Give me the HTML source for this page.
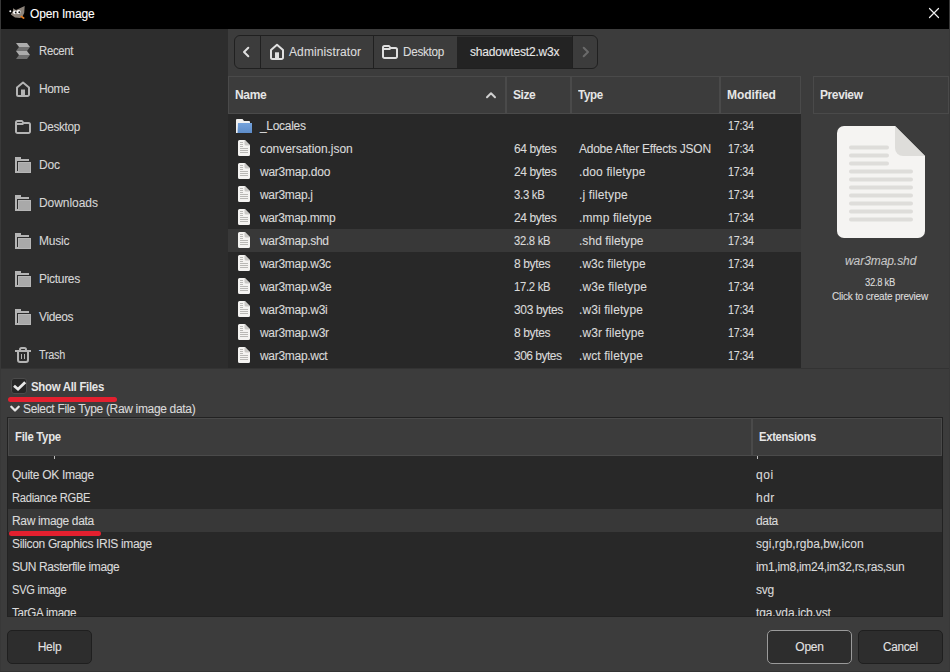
<!DOCTYPE html>
<html><head><meta charset="utf-8"><title>Open Image</title>
<style>
*{margin:0;padding:0;box-sizing:border-box}
html,body{width:950px;height:672px;overflow:hidden;background:#3c3c3c}
body{position:relative;font-family:"Liberation Sans",sans-serif;font-size:12px;color:#dadada;-webkit-text-stroke:0.1px currentColor}
.a{position:absolute}
.t{position:absolute;white-space:nowrap;line-height:14px}
svg{position:absolute;overflow:visible}
#title{left:0;top:0;width:950px;height:29px;background:#000}
#bl{left:0;top:0;width:1px;height:672px;background:#383838}
#br{left:949px;top:0;width:1px;height:672px;background:#383838}
#bb{left:0;top:671px;width:950px;height:1px;background:#333}
#side{left:1px;top:29px;width:227px;height:339px;background:#2d2d2d}
.si{left:15px;width:16px;height:16px}
.sl{left:39px;color:#d6d6d6}
#crumb{left:234px;top:35px;width:364px;height:34px;border:1px solid #202020;border-radius:6px;background:#3c3c3c;overflow:hidden}
.csep{position:absolute;top:0;width:1px;height:32px;background:#202020}
#list{left:228px;top:114px;width:573px;height:254px;background:#282828;overflow:hidden}
.hdr{position:absolute;top:76px;height:38px;background:#3c3c3c;border:1px solid #4a4a4a}
.hl{position:absolute;font-weight:bold;-webkit-text-stroke:0;color:#e6e6e6;letter-spacing:-0.3px;white-space:nowrap;line-height:14px}
.row{position:absolute;left:0;height:23px}
.row .t{top:5px}
#paneh{left:1px;top:368px;width:948px;height:1px;background:#333}
#ft{left:7px;top:417px;width:936px;height:200px;background:#282828;border:1px solid #222;overflow:hidden}
#fth{left:0;top:0;width:934px;height:38px;background:#3c3c3c;border:1px solid #4a4a4a}
#ftl{left:0;top:38px;width:934px;height:160px;overflow:hidden}
.btn{position:absolute;top:630px;height:34px;background:#2d2d2d;border:1px solid #1f1f1f;border-radius:5px}
.bt{position:absolute;top:9px;left:0;right:0;text-align:center;line-height:14px;color:#e2e2e2}
.red{position:absolute;height:5px;background:#e3202f;border-radius:2.5px}
</style></head><body>
<svg style="width:0;height:0;left:0;top:0"><defs>
<symbol id="doc" viewBox="0 0 12 16"><path d="M1.5 0H7L12 5V14.5A1.5 1.5 0 0 1 10.5 16H1.5A1.5 1.5 0 0 1 0 14.5V1.5A1.5 1.5 0 0 1 1.5 0Z" fill="#f4f3f1"/><path d="M6.5 0L12 5.5H8A1.5 1.5 0 0 1 6.5 4Z" fill="#c9c8c5"/><path d="M2 2.5H5M2 4.5H5M2 6.5H5M2 8.5H10M2 10.5H10M2 12.5H10" stroke="#b9b8b5" stroke-width="1"/></symbol>
<symbol id="fold" viewBox="0 0 16 14"><path d="M0 1A1 1 0 0 1 1 0H6.5L8 2H13A1 1 0 0 1 14 3V14H0Z" fill="#f0f0f0"/><defs><linearGradient id="fg" x1="0" y1="0" x2="0" y2="1"><stop offset="0" stop-color="#74a2dc"/><stop offset="1" stop-color="#5d8cc9"/></linearGradient></defs><path d="M2 4H16V14H1.5Z" fill="url(#fg)"/></symbol>
</defs></svg>
<div class="a" id="title"></div>
<svg style="left:8px;top:5px;width:18px;height:16px" viewBox="0 0 18 16"><circle cx="2.3" cy="6.3" r="1" fill="#fff"/><path d="M5 3.3L8 5L16.7 1L16.2 8L14.5 11.5L12 13L7 12.5L2.8 9.5L5 6Z" fill="#8c837a"/><circle cx="7" cy="7.3" r="1.9" fill="#fff"/><circle cx="10.6" cy="7" r="2.1" fill="#fff"/><circle cx="7.7" cy="7.5" r="0.9" fill="#111"/><circle cx="11.3" cy="7.3" r="1" fill="#111"/><path d="M13.3 11.6L15.6 13" stroke="#e07b22" stroke-width="1.8" stroke-linecap="round"/></svg>
<div class="t" style="left:30px;top:7px;color:#fff;letter-spacing:-0.15px;">Open Image</div>
<svg style="left:929px;top:8px;width:10px;height:10px" viewBox="0 0 10 10" stroke="#f0f0f0" stroke-width="1.2" stroke-linecap="round"><path d="M0.5 0.5L9.5 9.5M9.5 0.5L0.5 9.5"/></svg>
<div class="a" id="bl"></div><div class="a" id="br"></div><div class="a" id="bb"></div>
<div class="a" id="side"></div>
<svg class="si" style="top:43px" viewBox="0 0 16 16"><path d="M1 0H12L15 4H4Z" fill="#acacac"/><path d="M4 4H15L12 8H1Z" fill="#707070"/><path d="M1 8H12L15 12H4Z" fill="#acacac"/><path d="M4 12H15L12 16H1Z" fill="#707070"/></svg>
<div class="t sl" style="top:44px;letter-spacing:-0.3px;transform:scaleX(0.9438);transform-origin:0 0;">Recent</div>
<svg class="si" style="top:81px" viewBox="0 0 16 16" fill="none" stroke="#b4b4b4" stroke-width="2" stroke-linejoin="round"><path d="M2 6.5L8 1.5L14 6.5V13.5a1.5 1.5 0 0 1-1.5 1.5H3.5A1.5 1.5 0 0 1 2 13.5Z"/><rect x="6" y="8.5" width="4" height="6.5" fill="#b4b4b4" stroke="none"/></svg>
<div class="t sl" style="top:82px;letter-spacing:-0.38px;">Home</div>
<svg class="si" style="top:119px" viewBox="0 0 16 16" fill="none" stroke="#b4b4b4" stroke-width="2" stroke-linejoin="round"><path d="M1 12.5V3.5A1.5 1.5 0 0 1 2.5 2H7L8.5 4H13.5A1.5 1.5 0 0 1 15 5.5V12.5A1.5 1.5 0 0 1 13.5 14H2.5A1.5 1.5 0 0 1 1 12.5Z"/><path d="M1 5H8.5"/></svg>
<div class="t sl" style="top:120px;letter-spacing:-0.3px;transform:scaleX(0.9777);transform-origin:0 0;">Desktop</div>
<svg class="si" style="top:157px" viewBox="0 0 16 16"><path d="M0 0H6V2H14V4H2V14H16V16H0Z" fill="#b4b4b4"/><rect x="3" y="5" width="13" height="11" fill="#a9a9a9"/><rect x="3.5" y="5.5" width="12" height="10" fill="none" stroke="#b6b6b6" stroke-width="1"/></svg>
<div class="t sl" style="top:158px;letter-spacing:-0.17px;">Doc</div>
<svg class="si" style="top:195px" viewBox="0 0 16 16"><path d="M0 0H6V2H14V4H2V14H16V16H0Z" fill="#b4b4b4"/><rect x="3" y="5" width="13" height="11" fill="#a9a9a9"/><rect x="3.5" y="5.5" width="12" height="10" fill="none" stroke="#b6b6b6" stroke-width="1"/></svg>
<div class="t sl" style="top:196px;letter-spacing:-0.05px;">Downloads</div>
<svg class="si" style="top:233px" viewBox="0 0 16 16"><path d="M0 0H6V2H14V4H2V14H16V16H0Z" fill="#b4b4b4"/><rect x="3" y="5" width="13" height="11" fill="#a9a9a9"/><rect x="3.5" y="5.5" width="12" height="10" fill="none" stroke="#b6b6b6" stroke-width="1"/></svg>
<div class="t sl" style="top:234px;letter-spacing:-0.23px;">Music</div>
<svg class="si" style="top:271px" viewBox="0 0 16 16"><path d="M0 0H6V2H14V4H2V14H16V16H0Z" fill="#b4b4b4"/><rect x="3" y="5" width="13" height="11" fill="#a9a9a9"/><rect x="3.5" y="5.5" width="12" height="10" fill="none" stroke="#b6b6b6" stroke-width="1"/></svg>
<div class="t sl" style="top:272px;letter-spacing:-0.31px;">Pictures</div>
<svg class="si" style="top:309px" viewBox="0 0 16 16"><path d="M0 0H6V2H14V4H2V14H16V16H0Z" fill="#b4b4b4"/><rect x="3" y="5" width="13" height="11" fill="#a9a9a9"/><rect x="3.5" y="5.5" width="12" height="10" fill="none" stroke="#b6b6b6" stroke-width="1"/></svg>
<div class="t sl" style="top:310px;letter-spacing:-0.37px;">Videos</div>
<svg class="si" style="top:347px" viewBox="0 0 16 16" fill="none" stroke="#b4b4b4" stroke-width="2" stroke-linejoin="round"><path d="M0 4H16"/><path d="M5 3.5V2.5A1.5 1.5 0 0 1 6.5 1H9.5A1.5 1.5 0 0 1 11 2.5V3.5"/><path d="M3 5V13A2 2 0 0 0 5 15H11A2 2 0 0 0 13 13V5"/><path d="M6.5 7V12M9.5 7V12" stroke-width="1"/></svg>
<div class="t sl" style="top:348px;letter-spacing:-0.3px;transform:scaleX(0.9030);transform-origin:0 0;">Trash</div>
<div class="a" id="crumb">
<div class="csep" style="left:25px"></div>
<div class="csep" style="left:138px"></div>
<div class="a" style="left:222px;top:0;width:115px;height:32px;background:#232323;border-top:1px solid #313131"></div>
<div class="csep" style="left:337px"></div>
</div>
<svg style="left:242px;top:46px;width:8px;height:12px" viewBox="0 0 8 12" fill="none" stroke="#e0e0e0" stroke-width="2" stroke-linecap="round" stroke-linejoin="round"><path d="M6.3 1.8L2 6L6.3 10.2"/></svg>
<svg style="left:269px;top:43px;width:16px;height:18px" viewBox="0 0 16 18" fill="none" stroke="#e0e0e0" stroke-width="2" stroke-linejoin="round"><path d="M2 7L8 1.8L14 7V14.5A1.5 1.5 0 0 1 12.5 16H3.5A1.5 1.5 0 0 1 2 14.5Z"/><rect x="6" y="9.3" width="4" height="6.7" fill="#e0e0e0" stroke="none"/></svg>
<div class="t" style="left:289px;top:45px;color:#dcdcdc;letter-spacing:0.11px;">Administrator</div>
<svg style="left:382px;top:44px;width:16px;height:16px" viewBox="0 0 16 16" fill="none" stroke="#e0e0e0" stroke-width="2" stroke-linejoin="round"><path d="M1 12.5V3.5A1.5 1.5 0 0 1 2.5 2H7L8.5 4H13.5A1.5 1.5 0 0 1 15 5.5V12.5A1.5 1.5 0 0 1 13.5 14H2.5A1.5 1.5 0 0 1 1 12.5Z"/><path d="M1 5H8.5"/></svg>
<div class="t" style="left:403px;top:45px;color:#dcdcdc;letter-spacing:-0.3px;transform:scaleX(0.9777);transform-origin:0 0;">Desktop</div>
<div class="t" style="left:470px;top:45px;color:#e8e8e8;letter-spacing:-0.18px;">shadowtest2.w3x</div>
<svg style="left:582px;top:46px;width:8px;height:12px" viewBox="0 0 8 12" fill="none" stroke="#6a6a6a" stroke-width="2" stroke-linecap="round" stroke-linejoin="round"><path d="M1.7 1.8L6 6L1.7 10.2"/></svg>

<div class="hdr" style="left:228px;width:278px"></div>
<div class="hdr" style="left:506px;width:65px"></div>
<div class="hdr" style="left:571px;width:149px"></div>
<div class="hdr" style="left:720px;width:81px"></div>
<div class="hdr" style="left:813px;width:136px"></div>
<div class="hl" style="left:235px;top:88px;letter-spacing:-0.3px;">Name</div>
<svg style="left:485px;top:91px;width:12px;height:8px" viewBox="0 0 12 8" fill="none" stroke="#d0d0d0" stroke-width="2" stroke-linecap="round" stroke-linejoin="round"><path d="M2 6.3L6 2.3L10 6.3"/></svg>
<div class="hl" style="left:513px;top:88px;letter-spacing:-0.45px;">Size</div>
<div class="hl" style="left:578px;top:88px;letter-spacing:-0.3px;transform:scaleX(0.9608);transform-origin:0 0;">Type</div>
<div class="hl" style="left:727px;top:88px;letter-spacing:-0.07px;">Modified</div>
<div class="hl" style="left:820px;top:88px;letter-spacing:-0.4px;">Preview</div>
<div class="a" id="list">
<div class="row" style="top:0px;width:573px;">
<svg style="left:8px;top:5px;width:16px;height:14px"><use href="#fold"/></svg>
<div class="t" style="left:32px;letter-spacing:-0.3px;">_Locales</div>
<div class="t" style="left:500px;letter-spacing:-0.3px;transform:scaleX(0.8985);transform-origin:0 0;">17:34</div>
</div>
<div class="row" style="top:23px;width:573px;">
<svg style="left:10px;top:3px;width:12px;height:16px"><use href="#doc"/></svg>
<div class="t" style="left:32px;letter-spacing:-0.04px;">conversation.json</div>
<div class="t" style="left:286px;letter-spacing:-0.39px;">64 bytes</div>
<div class="t" style="left:351px;letter-spacing:-0.25px;">Adobe After Effects JSON</div>
<div class="t" style="left:500px;letter-spacing:-0.3px;transform:scaleX(0.8985);transform-origin:0 0;">17:34</div>
</div>
<div class="row" style="top:46px;width:573px;">
<svg style="left:10px;top:3px;width:12px;height:16px"><use href="#doc"/></svg>
<div class="t" style="left:32px;letter-spacing:-0.24px;">war3map.doo</div>
<div class="t" style="left:286px;letter-spacing:-0.39px;">24 bytes</div>
<div class="t" style="left:351px;letter-spacing:0.14px;">.doo filetype</div>
<div class="t" style="left:500px;letter-spacing:-0.3px;transform:scaleX(0.8985);transform-origin:0 0;">17:34</div>
</div>
<div class="row" style="top:69px;width:573px;">
<svg style="left:10px;top:3px;width:12px;height:16px"><use href="#doc"/></svg>
<div class="t" style="left:32px;letter-spacing:-0.3px;">war3map.j</div>
<div class="t" style="left:286px;letter-spacing:-0.3px;transform:scaleX(0.9471);transform-origin:0 0;">3.3 kB</div>
<div class="t" style="left:351px;letter-spacing:0.13px;">.j filetype</div>
<div class="t" style="left:500px;letter-spacing:-0.3px;transform:scaleX(0.8985);transform-origin:0 0;">17:34</div>
</div>
<div class="row" style="top:92px;width:573px;">
<svg style="left:10px;top:3px;width:12px;height:16px"><use href="#doc"/></svg>
<div class="t" style="left:32px;letter-spacing:-0.37px;">war3map.mmp</div>
<div class="t" style="left:286px;letter-spacing:-0.39px;">24 bytes</div>
<div class="t" style="left:351px;letter-spacing:0.11px;">.mmp filetype</div>
<div class="t" style="left:500px;letter-spacing:-0.3px;transform:scaleX(0.8985);transform-origin:0 0;">17:34</div>
</div>
<div class="row" style="top:115px;width:573px;background:#383838;">
<svg style="left:10px;top:3px;width:12px;height:16px"><use href="#doc"/></svg>
<div class="t" style="left:32px;letter-spacing:-0.3px;">war3map.shd</div>
<div class="t" style="left:286px;letter-spacing:-0.3px;transform:scaleX(0.9385);transform-origin:0 0;">32.8 kB</div>
<div class="t" style="left:351px;letter-spacing:0.04px;">.shd filetype</div>
<div class="t" style="left:500px;letter-spacing:-0.3px;transform:scaleX(0.8985);transform-origin:0 0;">17:34</div>
</div>
<div class="row" style="top:138px;width:573px;">
<svg style="left:10px;top:3px;width:12px;height:16px"><use href="#doc"/></svg>
<div class="t" style="left:32px;letter-spacing:-0.3px;">war3map.w3c</div>
<div class="t" style="left:286px;letter-spacing:-0.36px;">8 bytes</div>
<div class="t" style="left:351px;letter-spacing:0.05px;">.w3c filetype</div>
<div class="t" style="left:500px;letter-spacing:-0.3px;transform:scaleX(0.8985);transform-origin:0 0;">17:34</div>
</div>
<div class="row" style="top:161px;width:573px;">
<svg style="left:10px;top:3px;width:12px;height:16px"><use href="#doc"/></svg>
<div class="t" style="left:32px;letter-spacing:-0.3px;">war3map.w3e</div>
<div class="t" style="left:286px;letter-spacing:-0.3px;transform:scaleX(0.9385);transform-origin:0 0;">17.2 kB</div>
<div class="t" style="left:351px;letter-spacing:0.1px;">.w3e filetype</div>
<div class="t" style="left:500px;letter-spacing:-0.3px;transform:scaleX(0.8985);transform-origin:0 0;">17:34</div>
</div>
<div class="row" style="top:184px;width:573px;">
<svg style="left:10px;top:3px;width:12px;height:16px"><use href="#doc"/></svg>
<div class="t" style="left:32px;letter-spacing:-0.3px;">war3map.w3i</div>
<div class="t" style="left:286px;letter-spacing:-0.35px;">303 bytes</div>
<div class="t" style="left:351px;letter-spacing:0.1px;">.w3i filetype</div>
<div class="t" style="left:500px;letter-spacing:-0.3px;transform:scaleX(0.8985);transform-origin:0 0;">17:34</div>
</div>
<div class="row" style="top:207px;width:573px;">
<svg style="left:10px;top:3px;width:12px;height:16px"><use href="#doc"/></svg>
<div class="t" style="left:32px;letter-spacing:-0.3px;">war3map.w3r</div>
<div class="t" style="left:286px;letter-spacing:-0.36px;">8 bytes</div>
<div class="t" style="left:351px;letter-spacing:0.1px;">.w3r filetype</div>
<div class="t" style="left:500px;letter-spacing:-0.3px;transform:scaleX(0.8985);transform-origin:0 0;">17:34</div>
</div>
<div class="row" style="top:230px;width:573px;">
<svg style="left:10px;top:3px;width:12px;height:16px"><use href="#doc"/></svg>
<div class="t" style="left:32px;letter-spacing:-0.3px;">war3map.wct</div>
<div class="t" style="left:286px;letter-spacing:-0.5px;">306 bytes</div>
<div class="t" style="left:351px;letter-spacing:0.1px;">.wct filetype</div>
<div class="t" style="left:500px;letter-spacing:-0.3px;transform:scaleX(0.8985);transform-origin:0 0;">17:34</div>
</div>
</div>
<svg style="left:837px;top:126px;width:88px;height:112px" viewBox="0 0 88 112"><path d="M7 0H58L88 30V105A7 7 0 0 1 81 112H7A7 7 0 0 1 0 105V7A7 7 0 0 1 7 0Z" fill="#f5f4f2"/><path d="M58 0L88 30H66A8 8 0 0 1 58 22Z" fill="#deddda"/><path d="M14 21.6H50M14 29.6H50M14 37.6H50M14 45.6H74M14 53.6H74M14 61.6H74M14 69.6H74M14 77.6H74M14 85.6H74M14 93.6H74" stroke="#deddda" stroke-width="4" stroke-linecap="round"/></svg>
<div class="t" style="left:845px;top:254px;font-style:italic;color:#c8c8c8;letter-spacing:-0.07px;">war3map.shd</div>
<div class="t" style="left:865px;top:276px;font-size:10px;color:#dcdcdc;letter-spacing:-0.3px;transform:scaleX(0.9433);transform-origin:0 0;">32.8 kB</div>
<div class="t" style="left:832px;top:290px;font-size:10px;color:#dcdcdc;letter-spacing:-0.2px;">Click to create preview</div>

<div class="a" id="paneh"></div>
<div class="a" style="left:11px;top:378px;width:16px;height:16px;background:#262626;border:1px solid #4b4b4b;border-radius:3px"></div>
<svg style="left:11px;top:378px;width:16px;height:16px" viewBox="0 0 16 16" fill="none" stroke="#e8e8e8" stroke-width="2.8" stroke-linejoin="miter"><path d="M3 7.8L7 11.2L14.2 4.2"/></svg>
<div class="hl" style="left:31px;top:380px;letter-spacing:-0.3px;transform:scaleX(0.9515);transform-origin:0 0;">Show All Files</div>
<svg style="left:10px;top:405px;width:10px;height:9px" viewBox="0 0 10 9" fill="none" stroke="#e4e4e4" stroke-width="2.3" stroke-linecap="round" stroke-linejoin="round"><path d="M1.3 1.8L5 5.5L8.7 1.8"/></svg>
<div class="t" style="left:23px;top:402px;letter-spacing:-0.33px;">Select File Type (Raw image data)</div>

<div class="a" id="ft">
<div class="a" id="fth"></div>
<div class="a" style="left:743px;top:0;width:2px;height:38px;background:#4a4a4a"></div>
<div class="hl" style="left:7px;top:12px;letter-spacing:-0.3px;transform:scaleX(0.9460);transform-origin:0 0;">File Type</div>
<div class="hl" style="left:751px;top:12px;letter-spacing:-0.3px;transform:scaleX(0.9327);transform-origin:0 0;">Extensions</div>
<div class="a" id="ftl">
<div class="row" style="top:7px;width:934px;"><div class="t" style="left:4px;letter-spacing:-0.3px;">Quite OK Image</div><div class="t" style="left:748px;letter-spacing:0.53px;">qoi</div></div>
<div class="row" style="top:30px;width:934px;"><div class="t" style="left:4px;letter-spacing:-0.3px;transform:scaleX(0.9297);transform-origin:0 0;">Radiance RGBE</div><div class="t" style="left:748px;letter-spacing:0.48px;">hdr</div></div>
<div class="row" style="top:53px;width:934px;background:#383838;"><div class="t" style="left:4px;letter-spacing:-0.35px;">Raw image data</div><div class="t" style="left:748px;letter-spacing:-0.36px;">data</div></div>
<div class="row" style="top:76px;width:934px;"><div class="t" style="left:4px;letter-spacing:-0.35px;">Silicon Graphics IRIS image</div><div class="t" style="left:748px;letter-spacing:0.05px;">sgi,rgb,rgba,bw,icon</div></div>
<div class="row" style="top:99px;width:934px;"><div class="t" style="left:4px;letter-spacing:-0.41px;">SUN Rasterfile image</div><div class="t" style="left:748px;letter-spacing:-0.3px;">im1,im8,im24,im32,rs,ras,sun</div></div>
<div class="row" style="top:122px;width:934px;"><div class="t" style="left:4px;letter-spacing:-0.3px;transform:scaleX(0.9276);transform-origin:0 0;">SVG image</div><div class="t" style="left:748px;letter-spacing:-0.2px;">svg</div></div>
<div class="row" style="top:145px;width:934px;"><div class="t" style="left:4px;letter-spacing:-0.3px;transform:scaleX(0.9725);transform-origin:0 0;">TarGA image</div><div class="t" style="left:748px;letter-spacing:-0.13px;">tga,vda,icb,vst</div></div>
</div></div>
<div class="a" style="left:54px;top:456px;width:1px;height:3px;background:#bdbdbd"></div>
<div class="a" style="left:757px;top:456px;width:1px;height:3px;background:#bdbdbd"></div>
<div class="red" style="left:8px;top:397px;width:109px"></div>
<div class="red" style="left:9px;top:531px;width:92px"></div>
<div class="btn" style="left:7px;width:85px"><div class="bt" style="letter-spacing:-0.24px;">Help</div></div>
<div class="btn" style="left:767px;width:85px;border-color:#9a9a9a"><div class="bt" style="letter-spacing:-0.23px;">Open</div></div>
<div class="btn" style="left:858px;width:85px"><div class="bt" style="letter-spacing:-0.3px;transform:scaleX(0.9776);transform-origin:50% 0;">Cancel</div></div>
</body></html>
